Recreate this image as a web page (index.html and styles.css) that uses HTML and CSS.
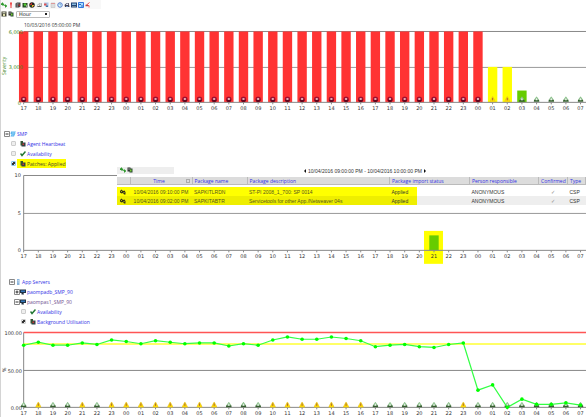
FILE: index.html
```html
<!DOCTYPE html>
<html lang="en">
<head>
    <meta charset="UTF-8">
    <meta name="viewport" content="width=device-width, initial-scale=1.0">
    <title>SMP Monitoring</title>
    <link rel="stylesheet" href="styles.css">
</head>
<body>
    <svg class="defs" aria-hidden="true">
        <symbol id="refresh" viewBox="0 0 12 12"><path d="M1 6V3h4M3 1v6M3 5h3v3M9 11V5M7 7h4v2H8" fill="none" stroke="#2f9a2f" stroke-width="2"/></symbol>
        <symbol id="alert" viewBox="0 0 12 12"><path d="M4 1h4L7 8H5zM4 9h4v2H4z" fill="#e33"/></symbol>
        <symbol id="server" viewBox="0 0 12 12"><path d="M1 3l3-2h7v8l-3 2H1z" fill="#444"/><path d="M3 4h4M3 8h3" stroke="#ccc" stroke-width="1.5"/><path d="M7 5h3v3H7z" fill="#a22"/></symbol>
        <symbol id="copy" viewBox="0 0 12 12"><path d="M1 1h6v8H1z" fill="#333"/><path d="M5 3h6v8H5z" fill="#2a4a33"/><path d="M6 5h3v4H6z" fill="#7c3"/><path d="M3 3h2v2H3z" fill="#eee"/></symbol>
        <symbol id="map" viewBox="0 0 12 12"><path d="M1 2h10v9H1z" fill="#264a26"/><path d="M3 5l3-3 3 3-3 4z" fill="#5c3"/><path d="M8 7h2v2H8z" fill="#fff"/></symbol>
        <symbol id="ball" viewBox="0 0 12 12"><circle cx="6" cy="6" r="5.5" fill="#222"/><path d="M6 1v5H1z" fill="#c33"/><path d="M6 6h5L6 11z" fill="#eb3"/><path d="M2 7h3v3z" fill="#393"/></symbol>
        <symbol id="graph" viewBox="0 0 12 12"><path d="M1 10h10V2L7 5v3H4z" fill="#666"/><path d="M2 7l6-5" stroke="#999" stroke-width="1.5"/><path d="M8 4h2v4H8z" fill="#ddd"/></symbol>
        <symbol id="flag" viewBox="0 0 12 12"><path d="M2 1h9v9H5z" fill="#a9c6e8"/><path d="M2 3h5v4H2z" fill="#d55"/><path d="M6 7h4v3H6z" fill="#47a"/></symbol>
        <symbol id="page" viewBox="0 0 12 12"><path d="M2 2h8v9H2z" fill="#ddd" stroke="#bbb"/><path d="M2 3h8" stroke="#d99" stroke-width="2"/></symbol>
        <symbol id="clock" viewBox="0 0 12 12"><circle cx="6" cy="6" r="4.5" fill="#dff" stroke="#57c" stroke-width="2"/><path d="M6 3v3h2" fill="none" stroke="#36a"/></symbol>
        <symbol id="print" viewBox="0 0 12 12"><path d="M1 6l4-4h5v3l1 5H2z" fill="#445"/><path d="M5 3h4L8 6H4z" fill="#eef"/><path d="M4 8h4v2H4z" fill="#79c"/></symbol>
        <symbol id="screen" viewBox="0 0 12 12"><path d="M0 1h12v10H0z" fill="#247"/><path d="M2 3h8v3H2z" fill="#8bd"/><path d="M2 8h8v1H2z" fill="#bcb"/></symbol>
        <symbol id="grid" viewBox="0 0 12 12"><path d="M1 1h10v10H1z" fill="#adf" stroke="#37d" stroke-width="2"/><path d="M2 4h4v2H2zM6 7h4v2H6z" fill="#26b"/></symbol>
        <symbol id="leave" viewBox="0 0 12 12"><path d="M9 1L2 7h6v4" fill="none" stroke="#e55" stroke-width="2"/><path d="M1 7h5" stroke="#b44" stroke-width="3"/></symbol>
        <symbol id="save" viewBox="0 0 12 12"><path d="M1 1h10v10H1z" fill="#443"/><path d="M3 2h6v3H3z" fill="#bba"/><path d="M4 6h4v4H4z" fill="#dda"/></symbol>
        <symbol id="metric" viewBox="0 0 12 12"><path d="M1 0h5v9H1z" fill="#353"/><path d="M5 3h6v8H3V8h2z" fill="#344"/><path d="M5 5h3v3H5z" fill="#c33"/></symbol>
        <symbol id="tick" viewBox="0 0 12 12"><path d="M1 5l3 4 7-8" fill="none" stroke="#273" stroke-width="3"/></symbol>
        <symbol id="checked" viewBox="0 0 12 12"><path d="M3 6l2 3 4-6" fill="none" stroke="#222" stroke-width="2"/></symbol>
        <symbol id="system" viewBox="0 0 12 12"><path d="M2 1h10l-2 3h1l-3 7H1l2-5H1z" fill="#5ab4ee"/><path d="M4 4h5M3 8h4" stroke="#dff"/></symbol>
        <symbol id="tower" viewBox="0 0 12 12"><path d="M4 0h5v12H4z" fill="#8ab4dc"/><path d="M5 3h3M5 6h3" stroke="#fff"/></symbol>
        <symbol id="host" viewBox="0 0 12 12"><path d="M0 1h12v7H7l1 3H3V8H0z" fill="#234"/><path d="M2 3h8v3H2z" fill="#37b"/></symbol>
        <symbol id="minus" viewBox="0 0 12 12"><path d="M1 1h10v10H1z" fill="#fff" stroke="#888" stroke-width="2"/><path d="M3 6h6" stroke="#333" stroke-width="2"/></symbol>
        <symbol id="plus" viewBox="0 0 12 12"><path d="M1 1h10v10H1z" fill="#fff" stroke="#888" stroke-width="2"/><path d="M3 6h6M6 3v6" stroke="#333" stroke-width="2"/></symbol>
        <symbol id="find" viewBox="0 0 12 12"><path d="M0 4l3-3 3 3 3-1 2 3v5H8L6 8 3 9 0 7z" fill="#333318"/><path d="M2 4h2v2H2zM7 6h2v2H7z" fill="#bb0"/></symbol>
        <symbol id="red" viewBox="0 0 12 12"><circle cx="6" cy="6" r="5.5" fill="#a01030"/><path d="M1 7a5 5 0 0 0 10 0z" fill="#600820"/><path d="M4 4h4v3H4z" fill="#f6dce0"/></symbol>
        <symbol id="yellow" viewBox="0 0 12 12"><path d="M6 0l6 11H0z" fill="#fd0" stroke="#db3"/><path d="M6 3v5" stroke="#a63" stroke-width="2"/></symbol>
        <symbol id="green" viewBox="0 0 12 12"><path d="M6 0l5 7H1z" fill="#8cc08c"/><path d="M1 7h10l1 4H0z" fill="#35602f"/><path d="M6 3l2 5H4z" fill="#eff6ef"/></symbol>
    </svg>

    <div class="toolbar">
        <button type="button" aria-label="Refresh"><svg><use href="#refresh"/></svg></button>
        <button type="button" aria-label="Alerts"><svg><use href="#alert"/></svg></button>
        <button type="button" aria-label="Servers"><svg><use href="#server"/></svg></button>
        <button type="button" aria-label="Map"><svg><use href="#map"/></svg></button>
        <button type="button" aria-label="Status"><svg><use href="#ball"/></svg></button>
        <button type="button" aria-label="Graph"><svg><use href="#graph"/></svg></button>
        <button type="button" aria-label="Flags"><svg><use href="#flag"/></svg></button>
        <button type="button" aria-label="Report"><svg><use href="#page"/></svg></button>
        <button type="button" aria-label="Schedule"><svg><use href="#clock"/></svg></button>
        <button type="button" aria-label="Print"><svg><use href="#print"/></svg></button>
        <button type="button" aria-label="Screen"><svg><use href="#screen"/></svg></button>
        <button type="button" aria-label="Layout"><svg><use href="#grid"/></svg></button>
        <button type="button" aria-label="Leave"><svg><use href="#leave"/></svg></button>
    </div>
    <div class="period">
        <button type="button" aria-label="Save"><svg><use href="#save"/></svg></button>
        <button type="button" aria-label="Copy"><svg><use href="#copy"/></svg></button>
        <select aria-label="Period">
            <option>Hour</option>
            <option>Day</option>
            <option>Week</option>
        </select>
    </div>

    <svg class="chart" id="severity" viewBox="0 0 586 109"></svg>

    <ul class="tree">
        <li class="level-1"><svg><use href="#minus"/></svg><svg><use href="#system"/></svg><a href="#">SMP</a></li>
        <li class="level-2"><input type="checkbox" id="heartbeat"><label for="heartbeat"><svg><use href="#metric"/></svg>Agent Heartbeat</label></li>
        <li class="level-2"><input type="checkbox" id="smp-avail"><label for="smp-avail"><svg><use href="#tick"/></svg>Availability</label></li>
        <li class="level-2"><input type="checkbox" id="patches" checked><label class="marked" for="patches"><svg><use href="#metric"/></svg>Patches: Applied</label></li>
    </ul>

    <div class="patches">
        <svg class="chart" id="applied" viewBox="0 0 586 108"></svg>
        <div class="popup">
            <div class="popup-head">
                <div class="popup-tools">
                    <button type="button" aria-label="Refresh"><svg><use href="#refresh"/></svg></button>
                    <button type="button" aria-label="Copy"><svg><use href="#copy"/></svg></button>
                </div>
                <div class="range">
                    <button type="button" class="prev" aria-label="Previous"></button>
                    <span>10/04/2016 09:00:00 PM - 10/04/2016 10:00:00 PM</span>
                    <button type="button" class="next" aria-label="Next"></button>
                </div>
            </div>
            <table>
                <colgroup>
                    <col class="c-icon"><col class="c-time"><col class="c-name"><col class="c-desc">
                    <col class="c-status"><col class="c-person"><col class="c-confirmed"><col class="c-type">
                </colgroup>
                <thead>
                    <tr>
                        <th></th>
                        <th class="time"><div><span>Time</span><i class="sort"></i></div></th>
                        <th>Package name</th>
                        <th>Package description</th>
                        <th>Package import status</th>
                        <th>Person responsible</th>
                        <th>Confirmed</th>
                        <th>Type</th>
                    </tr>
                </thead>
                <tbody>
                    <tr>
                        <td><svg><use href="#find"/></svg></td>
                        <td class="time">10/04/2016 09:10:00 PM</td>
                        <td>SAPKITLRDN</td>
                        <td>ST-PI 2008_1_700: SP 0014</td>
                        <td class="status">Applied</td>
                        <td>ANONYMOUS</td>
                        <td class="confirmed">✓</td>
                        <td>CSP</td>
                    </tr>
                    <tr>
                        <td><svg><use href="#find"/></svg></td>
                        <td class="time">10/04/2016 09:02:00 PM</td>
                        <td>SAPKITABTR</td>
                        <td>Servicetools for other App./Netweaver 04s</td>
                        <td class="status">Applied</td>
                        <td>ANONYMOUS</td>
                        <td class="confirmed">✓</td>
                        <td>CSP</td>
                    </tr>
                </tbody>
            </table>
        </div>
    </div>

    <ul class="tree">
        <li class="level-1b"><svg><use href="#minus"/></svg><svg><use href="#tower"/></svg><a href="#">App Servers</a></li>
        <li class="level-2b"><svg><use href="#plus"/></svg><svg><use href="#host"/></svg><a href="#">paompadb_SMP_90</a></li>
        <li class="level-2b"><svg><use href="#minus"/></svg><svg><use href="#host"/></svg><a class="visited" href="#">paompas1_SMP_90</a></li>
        <li class="level-3"><input type="checkbox" id="host-avail"><label for="host-avail"><svg><use href="#tick"/></svg>Availability</label></li>
        <li class="level-3"><input type="checkbox" id="background" checked><label for="background"><svg><use href="#metric"/></svg>Background Utilisation</label></li>
    </ul>

    <svg class="chart" id="utilisation" viewBox="0 0 586 91"></svg>

    <script src="charts.js"></script>
</body>
</html>
```
FILE: styles.css
```css
* {
    box-sizing: border-box;
}
body {
    margin: 0;
    font-family: "Liberation Sans", Arial, sans-serif;
    font-size: 5px;
    line-height: 6px;
    color: #333;
    background: white;
    border-left: 1px solid #d4d4d4;
    overflow-x: hidden;
}
.defs {
    position: absolute;
    width: 0;
    height: 0;
}
button {
    padding: 0;
    border: none;
    background: none;
    display: block;
    flex: none;
    cursor: pointer;
}
button svg, .tree svg, td svg {
    display: block;
    width: 6px;
    height: 6px;
    flex: none;
}
.toolbar {
    display: flex;
    align-items: center;
    gap: 1px;
    width: 100px;
    height: 9px;
    background: #f8f8f8;
}
.period {
    display: flex;
    align-items: center;
    gap: 1px;
    height: 11px;
    padding-bottom: 1px;
}
.period select {
    width: 34px;
    height: 7px;
    padding: 0 2px;
    margin-left: 1px;
    border: 1px solid #bbb;
    border-radius: 1px;
    font: 5px/5px "DejaVu Sans", sans-serif;
    color: #222;
    appearance: none;
    background: linear-gradient(#222, #222) no-repeat right 2px center / 2px 2px white;
}
.chart {
    display: block;
    width: 100%;
    font-family: "DejaVu Sans", Verdana, sans-serif;
    font-size: 5px;
    fill: #333;
}
.chart .green-text {
    fill: #3f8a1c;
}
.chart .caption {
    font-family: "Open Sans", sans-serif;
}
.tree {
    list-style: none;
    margin: 0;
    padding: 0;
    font-family: "Open Sans", sans-serif;
}
.tree li {
    display: flex;
    align-items: center;
    height: 10px;
    color: #3232e6;
}
.tree label {
    display: flex;
    align-items: center;
    gap: 1px;
    height: 9px;
    padding-left: 3px;
    margin-left: 1px;
}
.tree a {
    color: #3232e6;
    text-decoration: none;
    margin-left: 1px;
}
.tree a.visited {
    color: #705090;
}
.tree .marked {
    background: #ffff00;
    color: #444428;
}
.tree input {
    appearance: none;
    width: 5px;
    height: 5px;
    margin: 0;
    border: 1px solid #ccc;
    border-radius: 1px;
    background: #eee;
}
.tree input:checked {
    background: linear-gradient(135deg, #eee 30%, #333 30%, #333 70%, #eee 70%);
}
.tree #patches {
    border-color: #8bc4ee;
}
.level-1 {
    padding-left: 3px;
}
.level-1b {
    padding-left: 8px;
}
.level-2 {
    padding-left: 10px;
}
.level-2b {
    padding-left: 13px;
}
.level-3 {
    padding-left: 20px;
}
.patches {
    position: relative;
}
.popup {
    position: absolute;
    top: -2px;
    left: 116px;
    right: 0;
    background: white;
}
.popup-head {
    display: flex;
    height: 10px;
}
.popup-tools {
    display: flex;
    align-items: center;
    gap: 1px;
    width: 57px;
    height: 7px;
    padding-left: 3px;
    background: #eee;
}
.range {
    display: flex;
    align-items: center;
    gap: 2px;
    height: 8px;
    margin-left: 130px;
    white-space: nowrap;
}
.prev, .next {
    border: 2px solid transparent;
    width: 0;
    height: 0;
}
.prev {
    border-right: 2px solid #111;
    border-left: none;
}
.next {
    border-left: 2px solid #111;
    border-right: none;
}
table {
    width: 100%;
    border-collapse: collapse;
    table-layout: fixed;
    white-space: nowrap;
}
.c-icon {
    width: 13px;
}
.c-time {
    width: 62px;
}
.c-name {
    width: 55px;
}
.c-status {
    width: 80px;
}
.c-person {
    width: 69px;
}
.c-confirmed {
    width: 29px;
}
.c-type {
    width: 18px;
}
th {
    height: 8px;
    padding: 0 2px;
    background: #dcdcdc;
    border-right: 1px solid #bbb;
    border-bottom: 1px solid #bbb;
    font-weight: normal;
    font-family: "Open Sans", sans-serif;
    text-align: left;
    color: #3232e6;
}
th .sort {
    width: 4px;
    height: 4px;
    border: 1px solid #aaa;
}
th.time div {
    display: flex;
    align-items: center;
}
th.time span {
    flex: 1;
    text-align: center;
}
td {
    height: 9px;
    padding: 0 2px;
}
td svg {
    margin-left: 1px;
}
tbody td:nth-child(-n+4) {
    background: #ffff00;
    color: #555520;
}
tbody td.status {
    background: linear-gradient(to right, #ffff00 27px, transparent 27px);
}
tbody tr:nth-child(2) {
    background: #eee;
}
tbody tr:nth-child(2) td:nth-child(-n+4) {
    background: #eeee00;
}
tbody tr:nth-child(2) td.status {
    background: linear-gradient(to right, #eeee00 27px, transparent 27px);
}
thead::after {
    content: "";
    display: block;
    height: 2px;
}
td.time, td.confirmed {
    text-align: center;
}
td.confirmed {
    color: #888;
}
```
FILE: charts.js
```js
const LEFT = 22.7;
const STEP = 14.68;
const RED = '#ff3333';
const YELLOW = '#ffff00';
const GREEN = '#66cc00';

// 39 hours, starting at 17:00
const hours = [];
for (let i = 0; i < 39; i++) hours.push(String((17 + i) % 24).padStart(2, '0'));

const x = i => LEFT + i * STEP;
const line = (x1, y1, x2, y2, color, width = 1) =>
    `<line x1="${x1}" y1="${y1}" x2="${x2}" y2="${y2}" stroke="${color}" stroke-width="${width}"/>`;
const text = (tx, ty, value, anchor = 'middle', cls = '') =>
    `<text x="${tx}" y="${ty}" text-anchor="${anchor}" class="${cls}">${value}</text>`;
const icon = (i, y, name) =>
    `<use href="#${name}" x="${x(i) - 3}" y="${y - 3}" width="6" height="6"/>`;
const bar = (i, top, bottom, color) =>
    `<rect x="${x(i) - 4.7}" y="${top}" width="9.4" height="${bottom - top}" fill="${color}"/>`;

function hourAxis(y) {
    let out = line(LEFT, y, 586, y, '#888');
    hours.forEach((h, i) => {
        out += line(x(i), y, x(i), y + 2, '#888') + text(x(i), y + 8, h);
    });
    return out;
}

function drawSeverity() {
    const values = hours.map((h, i) => i < 32 ? 6000 : i < 34 ? 3000 : i === 34 ? 1000 : 0);
    let out = text(23, 7, '10/03/2016 05:00:00 PM', 'start', 'caption');
    out += line(LEFT, 11.5, 586, 11.5, '#888') + line(LEFT, 47.5, 586, 47.5, '#999');
    let icons = '';
    values.forEach((v, i) => {
        const color = v === 6000 ? RED : v === 3000 ? YELLOW : GREEN;
        if (v) out += bar(i, 82.5 - v / 6000 * 71, 82.5, color);
        icons += icon(i, 79.5, v === 6000 ? 'red' : v === 3000 ? 'yellow' : 'green');
    });
    out += hourAxis(82.5) + icons;
    out += text(22, 14, '6,000', 'end', 'green-text') + text(22, 49, '3,000', 'end', 'green-text');
    out += text(20, 85, '0', 'end', 'green-text');
    out += '<text class="green-text caption" transform="translate(5 46) rotate(-90)" text-anchor="middle">Severity</text>';
    document.getElementById('severity').innerHTML = out;
}

function drawApplied() {
    let out = line(LEFT, 6.5, 586, 6.5, '#888') + line(LEFT, 44.5, 586, 44.5, '#999');
    out += line(LEFT, 6.5, LEFT, 81.5, '#888');
    out += `<rect x="${x(28) - 10}" y="62" width="19" height="33" fill="${YELLOW}"/>`;
    out += bar(28, 66.5, 81.5, GREEN) + hourAxis(81.5);
    out += text(20, 8, '10', 'end') + text(20, 46, '5', 'end') + text(20, 83, '0', 'end');
    document.getElementById('applied').innerHTML = out;
}

function drawUtilisation() {
    const values = [83, 87, 83, 83, 86, 84, 90, 88, 85, 89, 87, 85, 86, 86, 82, 85, 83, 90, 94, 91,
        91, 94, 92, 89, 81, 83, 84, 81, 80, 84, 86, 23, 30, 0, 11, 4, 4, 6, 3];
    const states = 'gyggygy' + 'yyyyyyygggyyyyyyyggggggy' + 'gggggggg';
    const y = v => 80.5 - v * 0.75;
    let out = line(LEFT, 5.5, LEFT, 80.5, '#888') + line(LEFT, 43.5, 586, 43.5, '#888');
    out += line(LEFT, 17, 586, 17, '#ffff66', 2) + line(LEFT, 5.5, 586, 5.5, '#ff5555', 1.5);
    out += hourAxis(80.5);
    [...states].forEach((s, i) => out += icon(i, 78, s === 'y' ? 'yellow' : 'green'));
    const points = values.map((v, i) => `${x(i)},${y(v)}`).join(' ');
    out += `<polyline points="${points}" fill="none" stroke="#33ff44" stroke-width="1.2"/>`;
    values.forEach((v, i) => out += `<circle cx="${x(i)}" cy="${y(v)}" r="1.8" fill="#00ff00"/>`);
    out += text(21, 8, '100.00', 'end') + text(21, 46, '50.00', 'end') + text(21, 83, '0.00', 'end');
    out += '<text transform="translate(5 43) rotate(-90)" text-anchor="middle">%</text>';
    document.getElementById('utilisation').innerHTML = out;
}

drawSeverity();
drawApplied();
drawUtilisation();
```
